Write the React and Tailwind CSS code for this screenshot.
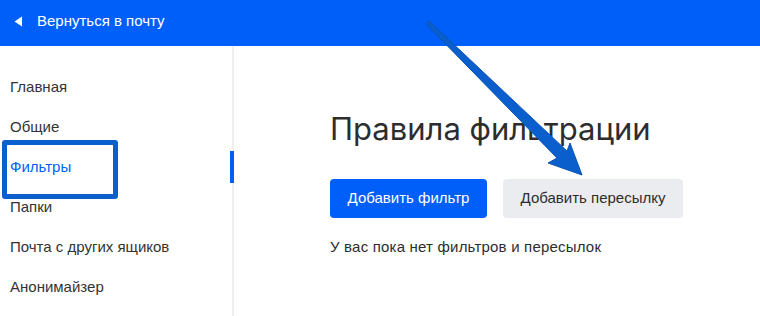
import React from "react";

const items = ["Главная", "Общие", "Фильтры", "Папки", "Почта с других ящиков", "Анонимайзер"];

export default function App() {
  return (
    <div className="relative w-[760px] h-[316px] overflow-hidden bg-white" style={{ fontFamily: '"Liberation Sans", Arial, sans-serif' }}>
      <header className="h-[46px] bg-[#005ff9] flex items-center pl-[14px] text-white">
        <svg width="9" height="11" viewBox="0 0 9 11" className="mr-[14px] -mt-[3px]">
          <path d="M8 0.5 L8 10.5 L0.5 5.5 Z" fill="white" />
        </svg>
        <span className="text-[15px] -mt-[3px]">Вернуться в почту</span>
      </header>
      <div className="flex h-[270px]">
        <nav className="w-[234px] border-r-2 border-[#efefef] pt-[21px] relative">
          {items.map((it, i) => (
            <div key={it} className={`h-[40px] flex items-center pl-[10px] text-[15px] ${i === 2 ? "text-[#005ff9]" : "text-[#333]"}`}>
              {it}
            </div>
          ))}
          <div className="absolute right-[-2px] top-[105px] w-[4px] h-[32px] bg-[#005ff9]" />
        </nav>
        <main className="pl-[96px] pt-[65px]">
          <h1 className="text-[31px] leading-[36px] text-[#2c2d2e]" style={{ fontFamily: 'Inter, "Noto Sans", sans-serif' }}>
            Правила фильтрации
          </h1>
          <div className="flex gap-[16px] mt-[32px]">
            <button className="h-[39px] w-[157px] rounded-[4px] bg-[#005ff9] text-white text-[15px]">Добавить фильтр</button>
            <button className="h-[39px] w-[180px] rounded-[4px] bg-[#ebecef] text-[#2c2d2e] text-[15px]">Добавить пересылку</button>
          </div>
          <p className="mt-[18px] text-[15px] tracking-[0.2px] text-[#2c2d2e]">У вас пока нет фильтров и пересылок</p>
        </main>
      </div>
      <div className="absolute left-[2px] top-[140px] w-[116px] h-[59px] border-[5px] border-[#0a5fcc] rounded-[3px]" />
      <svg className="absolute left-0 top-0 pointer-events-none" width="760" height="316">
        <path d="M427 22 L429 21 L567 151 L570 143 L582 175 L548 163 L557 158 L426 24 Z" fill="#0a5fcc" stroke="#0b55b5" strokeWidth="1" strokeLinejoin="round" />
      </svg>
    </div>
  );
}
